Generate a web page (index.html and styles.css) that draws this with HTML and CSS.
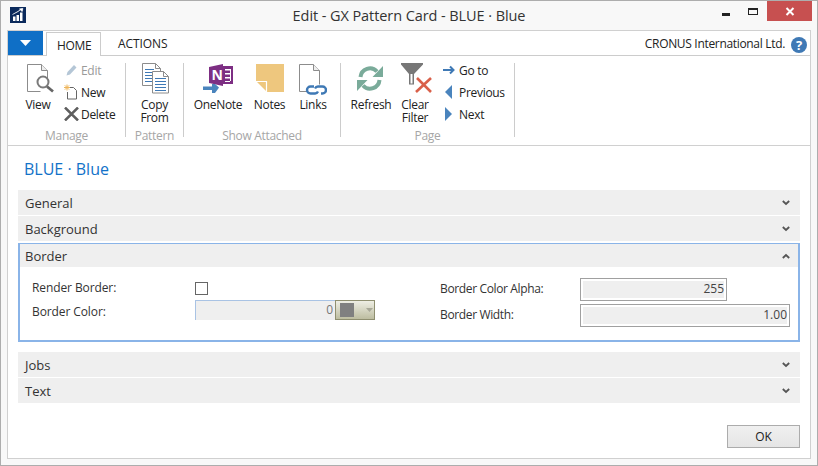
FILE: index.html
```html
<!DOCTYPE html>
<html lang="en">
<head>
<meta charset="utf-8">
<title>Edit - GX Pattern Card - BLUE · Blue</title>
<link rel="stylesheet" href="styles.css">
</head>
<body>
<div class="window">
  <header class="titlebar">
    <div class="tb-left">
      <svg class="logo" width="16" height="16" viewBox="0 0 16 16"><rect width="16" height="16" fill="#0b2a5c"/><path d="M3 9.500h2.500V14H3zM6.500 8H9v6H6.500zM10 5.500h2.500V14H10z" fill="#fff"/><path d="M2.500 7.500 8 4.500l2.500-1.800M9.500 2l3.300-.5-.6 3z" fill="#fff" stroke="#fff" stroke-width=".8"/></svg>
    </div>
    <div class="tb-title">Edit - GX Pattern Card - BLUE · Blue</div>
    <div class="tb-right">
      <span class="win-min"></span>
      <span class="win-max"></span>
      <span class="win-close"><svg width="10" height="9" viewBox="0 0 10 9"><path d="M1.500 1 8.500 8M8.500 1 1.500 8" stroke="#fff" stroke-width="2"/></svg></span>
    </div>
  </header>
  <div class="frame">
    <nav class="tabbar">
      <button class="app-btn"><svg width="11" height="6" viewBox="0 0 11 6"><path d="M0 0h11L5.500 6z" fill="#fff"/></svg></button>
      <div class="tab tab-active">HOME</div>
      <div class="tab">ACTIONS</div>
      <div class="company">CRONUS International Ltd.</div>
      <svg class="help" width="16" height="16" viewBox="0 0 16 16"><circle cx="8" cy="8" r="8" fill="#3f79b5"/><text x="8" y="12.500" text-anchor="middle" class="help-q">?</text></svg>
    </nav>
    <section class="ribbon">
      <div class="group g-manage">
        <div class="items">
          <div class="big w-view">
            <svg class="ico" width="32" height="32" viewBox="0 0 32 32"><path d="M5.500 1.500h14l6 6v8M5.500 1.500v27h13" fill="#fff" stroke="#8c8c8c"/><path d="M19.500 1.500v6h6" fill="#eee" stroke="#8c8c8c"/><circle cx="21" cy="19" r="5.500" fill="#fff" stroke="#7a7a7a" stroke-width="2"/><path d="m25 23.500 6 5" stroke="#666" stroke-width="2.800"/></svg>
            <span class="lbl">View</span>
          </div>
          <div class="smalls">
            <div class="small dim"><svg width="15" height="14" viewBox="0 0 15 14"><path d="M2.500 12.500l1-3.500 6.500-7 2.500 2.500-6.500 7z" fill="#b4c6d6"/></svg><span>Edit</span></div>
            <div class="small"><svg width="15" height="16" viewBox="0 0 15 16"><path d="M4.500 3.500h5l3 3v8.500h-9V8" fill="#fff" stroke="#666"/><path d="M3 .500v6M0 3.500h6M.8 1.300l4.400 4.400M5.200 1.300.8 5.700" stroke="#eeb65c"/></svg><span>New</span></div>
            <div class="small"><svg width="15" height="14" viewBox="0 0 15 14"><path d="M1 .5 14 13.500M14 .5 1 13.500" stroke="#5e5e5e" stroke-width="2.500"/></svg><span>Delete</span></div>
          </div>
        </div>
        <div class="group-name">Manage</div>
      </div>
      <div class="group g-pattern">
        <div class="items">
          <div class="big w-copy">
            <svg class="ico" width="30" height="32" viewBox="0 0 30 32"><path d="M2.500.500h13l5 5v17h-18z" fill="#fff" stroke="#8c8c8c"/><path d="M15.500.500v5h5" fill="none" stroke="#8c8c8c"/><path d="M5 6.500h9M5 9.500h12M5 12.500h12M5 15.500h12M5 18.500h12" stroke="#3f79b5"/><path d="M12.500 8.500h11l5 5v16.500h-16z" fill="#fff" stroke="#8c8c8c"/><path d="M23.500 8.500v5h5" fill="none" stroke="#8c8c8c"/><path d="M15 15.500h11M15 18.500h11M15 21.500h11M15 24.500h11M15 27.500h11" stroke="#3f79b5"/></svg>
            <span class="lbl">Copy<br>From</span>
          </div>
        </div>
        <div class="group-name">Pattern</div>
      </div>
      <div class="group g-show">
        <div class="items">
          <div class="big w-one">
            <svg class="ico" width="32" height="32" viewBox="0 0 32 32"><path d="M7 4 21 1V23L7 20z" fill="#7d2e83"/><path d="M21 3h10v18H21z" fill="#7d2e83"/><path d="M23 6h5v1.500h-5zM23 10h5v1.500h-5zM23 14h5v1.500h-5zM23 18h5v1h-5zM28 6h1v12h-1z" fill="#fff"/><text x="9.500" y="17" class="on-n">N</text><path d="M1 23.500h9V21h3l4 3.500-1 1.500-3 4h-3v-3H1z" fill="#4a84bd"/></svg>
            <span class="lbl">OneNote</span>
          </div>
          <div class="big w-notes">
            <svg class="ico" width="28" height="32" viewBox="0 0 28 32"><path d="M0 1h28v28H11L0 18z" fill="#eec77e"/><path d="M0 18.500h10.500V29" fill="none" stroke="#fff" stroke-width="1.200"/></svg>
            <span class="lbl">Notes</span>
          </div>
          <div class="big w-links">
            <svg class="ico" width="28" height="32" viewBox="0 0 28 32"><path d="M.5 1.500h14l6 6v14M.5 1.500v27h8" fill="#fff" stroke="#8c8c8c"/><path d="M14.500 1.500v6h6" fill="#eee" stroke="#8c8c8c"/><path d="M15 23.500h-3.500a3.500 3.500 0 0 0 0 7H16a3.500 3.500 0 0 0 3-2M13 28.500h-0M22 30.500h1.500a3.500 3.500 0 0 0 0-7H19a3.500 3.500 0 0 0-3 2" fill="none" stroke="#3f79b5" stroke-width="2.400"/></svg>
            <span class="lbl">Links</span>
          </div>
        </div>
        <div class="group-name">Show Attached</div>
      </div>
      <div class="group g-page">
        <div class="items">
          <div class="big w-refresh">
            <svg class="ico" width="28" height="32" viewBox="0 0 28 32"><path d="M3.500 14A9.500 9.500 0 0 1 20 8.500M22.500 17A9.500 9.500 0 0 1 6 22.500" fill="none" stroke="#7aab9a" stroke-width="4"/><path d="M26 3v11H15.500zM0 28V17h10.500z" fill="#7aab9a"/></svg>
            <span class="lbl">Refresh</span>
          </div>
          <div class="big w-clear">
            <svg class="ico" width="34" height="32" viewBox="0 0 34 32"><path d="M3 0h22v1.500L16 11v10.500h-5V11L3 1.500z" fill="#777"/><path d="M12.500 11v9.500h2V11z" fill="#fff"/><path d="M18 29 33 15M19 15l14 14" stroke="#d9604a" stroke-width="2.600"/></svg>
            <span class="lbl">Clear<br>Filter</span>
          </div>
          <div class="smalls s-nav">
            <div class="small"><svg width="15" height="14" viewBox="0 0 15 14"><path d="M0 7h10M7 3.500l3.500 3.500L7 10.500" fill="none" stroke="#3f79b5" stroke-width="2"/></svg><span>Go to</span></div>
            <div class="small"><svg width="15" height="14" viewBox="0 0 15 14"><path d="M9 0v14L2 7z" fill="#4a84bd"/></svg><span>Previous</span></div>
            <div class="small"><svg width="15" height="14" viewBox="0 0 15 14"><path d="M2 0v14l7-7z" fill="#4a84bd"/></svg><span>Next</span></div>
          </div>
        </div>
        <div class="group-name">Page</div>
      </div>
    </section>
    <main class="content">
      <h1 class="page-title">BLUE · Blue</h1>
      <div class="fasttab">General<svg class="chev" width="8" height="6" viewBox="0 0 8 6"><path d="M.8 1 4 4l3.200-3" fill="none" stroke="#555" stroke-width="1.800"/></svg></div>
      <div class="fasttab">Background<svg class="chev" width="8" height="6" viewBox="0 0 8 6"><path d="M.8 1 4 4l3.200-3" fill="none" stroke="#555" stroke-width="1.800"/></svg></div>
      <div class="open-tab">
        <div class="fasttab fasttab-open">Border<svg class="chev" width="8" height="6" viewBox="0 0 8 6"><path d="M.8 5 4 2l3.200 3" fill="none" stroke="#555" stroke-width="1.800"/></svg></div>
        <div class="fields">
          <div class="col col-l">
            <div class="row r-check"><label>Render Border:</label><span class="checkbox"></span></div>
            <div class="row r-color"><label>Border Color:</label><span class="ro-input">0</span><span class="picker"><i class="swatch"></i><svg width="7" height="4" viewBox="0 0 7 4"><path d="M0 0h7L3.500 4z" fill="#a8a898"/></svg></span></div>
          </div>
          <div class="col col-r">
            <div class="row r-num"><label>Border Color Alpha:</label><span class="num num-short"><span>255</span></span></div>
            <div class="row r-num"><label>Border Width:</label><span class="num num-long"><span>1.00</span></span></div>
          </div>
        </div>
      </div>
      <div class="fasttab after-open">Jobs<svg class="chev" width="8" height="6" viewBox="0 0 8 6"><path d="M.8 1 4 4l3.200-3" fill="none" stroke="#555" stroke-width="1.800"/></svg></div>
      <div class="fasttab">Text<svg class="chev" width="8" height="6" viewBox="0 0 8 6"><path d="M.8 1 4 4l3.200-3" fill="none" stroke="#555" stroke-width="1.800"/></svg></div>
      <div class="actions"><button class="ok">OK</button></div>
    </main>
  </div>
</div>
</body>
</html>
```
FILE: styles.css
```css
* { box-sizing: border-box; }
html, body { margin: 0; padding: 0; }
body { width: 818px; height: 466px; overflow: hidden; font-family: "Open Sans", "Noto Sans", sans-serif; font-size: 12px; color: #333; background: #fff; }
.window { width: 818px; height: 466px; background: #f8f8f8; border: 1px solid #adadad; display: flex; flex-direction: column; }
.titlebar { height: 29px; flex: none; display: grid; grid-template-columns: 1fr auto 1fr; }
.tb-left { padding: 6px 0 0 9px; }
.logo { display: block; }
.tb-title { font-size: 14.5px; letter-spacing: -.08px; line-height: 30px; color: #333; }
.tb-right { display: flex; justify-content: flex-end; padding-right: 5px; }
.win-min { width: 8px; height: 3px; background: #222; margin: 12px 18px 0 0; }
.win-max { width: 10px; height: 7px; border: 1px solid #222; border-top-width: 2px; margin: 7px 9px 0 0; }
.win-close { width: 45px; height: 20px; background: #c75050; display: flex; align-items: center; justify-content: center; }
.frame { flex: none; width: 804px; height: 429px; margin-left: 6px; background: #fff; border: 1px solid #d0d0d0; display: flex; flex-direction: column; }
.tabbar { height: 25px; flex: none; display: flex; align-items: flex-end; border-bottom: 1px solid #ccc; }
.app-btn { width: 35px; height: 24px; margin: 0 3px 0 0; padding: 0; border: 0; background: #0f6fc6; display: flex; align-items: center; justify-content: center; align-self: flex-start; }
.tab { height: 24px; padding: 0 17px; line-height: 26px; color: #222; letter-spacing: -.1px; }
.tab-active { padding: 0 10px; width: 55px; margin-bottom: -1px; height: 24px; background: #fff; border: 1px solid #ccc; border-bottom: 0; letter-spacing: -.3px; }
.company { margin-left: auto; line-height: 22px; height: 22px; color: #222; font-size: 12px; letter-spacing: -.32px; }
.help { margin: 0 3px 2px 6px; }
.help-q { font: 700 13px "Open Sans", sans-serif; fill: #fff; }
.ribbon { height: 90px; flex: none; display: flex; border-bottom: 1px solid #d0d0d0; background: #fff; padding-top: 7px; letter-spacing: -.3px; }
.group { display: flex; flex-direction: column; border-right: 1px solid #ccc; height: 74px; }
.g-manage { width: 118px; }
.g-pattern { width: 58px; }
.g-show { width: 157px; }
.g-page { width: 174px; }
.items { display: flex; height: 65px; flex: none; }
.group-name { text-align: center; color: #a6a6a6; line-height: 16px; }
.big { display: flex; flex-direction: column; align-items: center; }
.ico { display: block; height: 32px; flex: none; }
.lbl { display: block; text-align: center; line-height: 13px; margin-top: 3px; color: #222; }
.w-view { width: 42px; margin-left: 9px; }
.w-copy { width: 57px; }
.w-one { width: 62px; margin-left: 3px; }
.w-notes { width: 41px; }
.w-links { width: 46px; }
.w-refresh { width: 60px; }
.w-clear { width: 28px; }
.smalls { display: flex; flex-direction: column; gap: 6px; margin: -1px 0 0 5px; }
.s-nav { margin-left: 14px; }
.small { display: flex; align-items: center; height: 16px; color: #222; gap: 2px; }
.s-nav .small { gap: 1px; }
.small svg { flex: none; }
.dim { color: #9a9a9a; }
.content { flex: 1; padding: 0 10px; display: flex; flex-direction: column; }
.page-title { margin: 12px 0 10px 6px; font-size: 16px; font-weight: 400; line-height: 22px; color: #1272c8; }
.fasttab { height: 25px; flex: none; margin-bottom: 1px; background: #efefef; padding: 0 10px 0 7px; display: flex; align-items: center; justify-content: space-between; font-size: 13px; color: #333; }
.open-tab { height: 99px; flex: none; margin-top: 1px; margin-bottom: 10px; border-style: solid; border-width: 1px 2px 2px; border-color: #8ab4e8; }
.fasttab-open { height: 23px; margin: 0; padding-left: 5px; padding-right: 8px; }
.fields { display: flex; padding: 11px 0 0 12px; }
.col { display: flex; flex-direction: column; }
.col-l { width: 408px; }
.row { display: flex; align-items: center; }
.row label { flex: none; margin-top: -2px; }
.col-l label { width: 163px; letter-spacing: -.1px; }
.col-r label { width: 140px; letter-spacing: -.36px; }
.r-check { height: 20px; }
.checkbox { width: 13px; height: 13px; border: 1px solid #666; background: #fff; }
.r-color { height: 20px; margin-top: 2px; }
.row.r-color label { margin-top: 2px; }
.ro-input { width: 140px; height: 20px; background: #efefef; border: 1px solid #a9c3e4; border-width: 1px 0 0 1px; text-align: right; padding-right: 2px; line-height: 18px; color: #777; }
.picker { width: 40px; height: 20px; border: 1px solid #8f8f70; background: linear-gradient(#eeeee4, #bdbda0); display: flex; align-items: center; padding-left: 4px; gap: 12px; }
.swatch { display: block; width: 14px; height: 14px; background: #808080; }
.r-num { height: 23px; margin-bottom: 3px; }
.num { height: 23px; border: 1px solid #a0a0a0; padding: 2px; display: block; }
.num span { display: block; height: 17px; background: #efefef; text-align: right; line-height: 16px; color: #444; }
.num-short { width: 147px; }
.num-long { width: 210px; }
.actions { display: flex; justify-content: flex-end; margin-top: 21px; }
.ok { width: 73px; height: 23px; padding: 0; border: 1px solid #acacac; background: linear-gradient(#f0f0f0, #e5e5e5); font: 12px "Open Sans", sans-serif; color: #222; }
.on-n { font: 700 14px "Open Sans", sans-serif; fill: #fff; }
```
